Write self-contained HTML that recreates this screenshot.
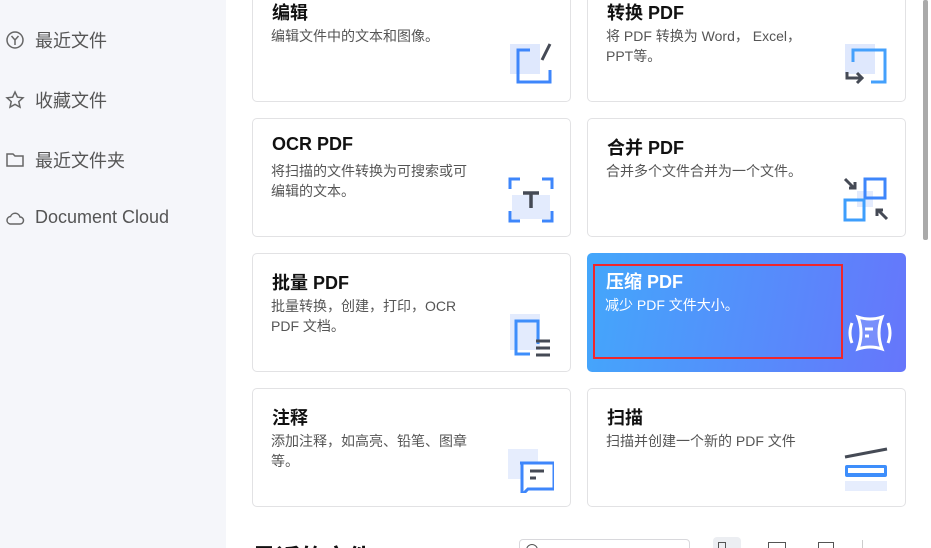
<!DOCTYPE html>
<html><head><meta charset="utf-8"><style>
*{margin:0;padding:0;box-sizing:border-box}
html,body{width:931px;height:548px;overflow:hidden}
body{background:#fff;font-family:"Liberation Sans","Noto Sans CJK SC",sans-serif;position:relative}
.side{position:absolute;left:0;top:0;width:226px;height:548px;background:#f5f6fa}
.nav{position:absolute;left:5px;font-size:18px;color:#555;display:flex;align-items:center;gap:10px}
.nav svg{width:20px;height:20px}
.card{position:absolute;width:319px;height:119px;border:1px solid #e2e2e4;border-radius:5px;background:#fff}
.card h3{position:absolute;left:19px;top:15px;font-size:18px;font-weight:bold;color:#111}
.card p{position:absolute;left:18px;top:42px;width:208px;font-size:14px;line-height:20px;color:#555}
.card svg{position:absolute;right:16px;top:58px;width:46px;height:46px}
.blue{background:linear-gradient(100deg,#43a7fb,#6676fb);border:none}
.blue h3,.blue p{color:#fff}
.sb{position:absolute;left:923px;top:0;width:5px;height:240px;background:#aaa;border-radius:2px}
</style></head><body>
<div class="side">
<div class="nav" style="top:27px"><svg viewBox="0 0 20 20" fill="none" stroke="#666" stroke-width="1.5"><circle cx="10" cy="10" r="8"/><path d="M6.5 6l3.5 4 3.5-4M10 10v5"/></svg>最近文件</div>
<div class="nav" style="top:87px"><svg viewBox="0 0 20 20" fill="none" stroke="#666" stroke-width="1.5"><path d="M10 2l2.4 5.2 5.6.6-4.2 3.8 1.2 5.6L10 14.4 5 17.2l1.2-5.6L2 7.8l5.6-.6z"/></svg>收藏文件</div>
<div class="nav" style="top:147px"><svg viewBox="0 0 20 20" fill="none" stroke="#666" stroke-width="1.5"><path d="M2 4h6l2 2h8v10H2z"/></svg>最近文件夹</div>
<div class="nav" style="top:207px"><svg viewBox="0 0 20 20" fill="none" stroke="#666" stroke-width="1.5"><path d="M5 16h10a3.5 3.5 0 000-7 5 5 0 00-9.5-.5A3.8 3.8 0 005 16z"/></svg>Document Cloud</div>
</div>
<div class="sb"></div>

<div class="card" style="left:252px;top:-17px"><h3>编辑</h3><p>编辑文件中的文本和图像。</p>
<svg viewBox="0 0 46 46"><rect x="2" y="2" width="30" height="30" fill="#dfe8fd"/><path d="M22 8H10v32h32V28" fill="none" stroke="#3e86fb" stroke-width="3"/><path d="M42 2l-8 16" stroke="#454a55" stroke-width="3"/></svg></div>
<div class="card" style="left:587px;top:-17px"><h3>转换 PDF</h3><p>将 PDF 转换为 Word， Excel，PPT等。</p>
<svg viewBox="0 0 46 46"><rect x="2" y="2" width="30" height="30" fill="#dfe8fd"/><path d="M10 20V8h32v32H28" fill="none" stroke="#44a0fc" stroke-width="3"/><path d="M4 30v6h14M14 31l5 5-5 5" fill="none" stroke="#454a55" stroke-width="3"/></svg></div>

<div class="card" style="left:252px;top:118px"><h3>OCR PDF</h3><p>将扫描的文件转换为可搜索或可编辑的文本。</p>
<svg viewBox="0 0 46 46"><rect x="4" y="18" width="38" height="24" fill="#e3ebfd"/><path d="M2 12V2h10M34 2h10v10M2 34v10h10M34 44h10V34" fill="none" stroke="#3e86fb" stroke-width="3"/><path d="M15 16h16M23 16v15" stroke="#454a55" stroke-width="3.5"/></svg></div>
<div class="card" style="left:587px;top:118px"><h3>合并 PDF</h3><p>合并多个文件合并为一个文件。</p>
<svg viewBox="0 0 46 46"><rect x="14" y="14" width="16" height="16" fill="#e3ebfd"/><rect x="22" y="2" width="20" height="19" fill="none" stroke="#3e86fb" stroke-width="3"/><rect x="2" y="23" width="19" height="20" fill="none" stroke="#3e9efc" stroke-width="3"/><path d="M2 2l9 9M6 11h6V5M44 42l-9-9M40 33h-6v6" fill="none" stroke="#454a55" stroke-width="3"/></svg></div>

<div class="card" style="left:252px;top:253px"><h3>批量 PDF</h3><p>批量转换，创建，打印，OCR PDF 文档。</p>
<svg viewBox="0 0 46 46"><rect x="2" y="2" width="30" height="36" fill="#e3ebfd"/><path d="M30 32V9H8v33h14" fill="none" stroke="#3e8efb" stroke-width="3"/><path d="M28 29h14M28 36h14M28 43h14" stroke="#454a55" stroke-width="3"/></svg></div>
<div class="card blue" style="left:587px;top:253px"><h3>压缩 PDF</h3><p>减少 PDF 文件大小。</p>
<svg viewBox="0 0 46 46" style="right:14px;top:56px"><path d="M12 8q12 4 24 0q-6 16 0 32q-12-4-24 0q6-16 0-32z" fill="rgba(255,255,255,.15)" stroke="#fff" stroke-width="3"/><path d="M6 14q-4 10 0 20M42 14q4 10 0 20M19 20h8M19 27h4" fill="none" stroke="#fff" stroke-width="3"/></svg></div>
<div style="position:absolute;left:593px;top:264px;width:250px;height:95px;border:2px solid #f0262d"></div>

<div class="card" style="left:252px;top:388px"><h3>注释</h3><p>添加注释，如高亮、铅笔、图章等。</p>
<svg viewBox="0 0 46 46"><rect x="0" y="2" width="30" height="30" fill="#e6edfd"/><path d="M12 16h34v26H20l-6 6V16z" fill="#fff" stroke="#3e86fb" stroke-width="3"/><path d="M22 24h14M22 31h6" stroke="#454a55" stroke-width="3"/></svg></div>
<div class="card" style="left:587px;top:388px"><h3>扫描</h3><p>扫描并创建一个新的 PDF 文件</p>
<svg viewBox="0 0 46 46"><path d="M2 10l42-8" stroke="#454a55" stroke-width="3"/><rect x="2" y="18" width="42" height="12" rx="2" fill="#3e8efb"/><rect x="5" y="21" width="36" height="5" fill="#fff"/><rect x="2" y="34" width="42" height="10" fill="#e6edfd"/></svg></div>

<div style="position:absolute;left:252px;top:538px;font-size:24px;font-weight:bold;color:#111">最近的文件</div>
<div style="position:absolute;left:519px;top:539px;width:171px;height:30px;border:1px solid #d8d8dc;border-radius:4px;font-size:13px;color:#999;padding:5px 0 0 34px">搜索</div>
<div style="position:absolute;left:526px;top:544px;width:12px;height:12px;border:1.5px solid #555;border-radius:50%"></div>
<div style="position:absolute;left:713px;top:537px;width:28px;height:20px;background:#eceef2;border-radius:4px"></div>
<div style="position:absolute;left:718px;top:542px;width:8px;height:8px;border:1.5px solid #555"></div>
<div style="position:absolute;left:768px;top:542px;width:18px;height:8px;border:1.5px solid #555"></div>
<div style="position:absolute;left:818px;top:542px;width:16px;height:8px;border:1.5px solid #555"></div>
<div style="position:absolute;left:862px;top:540px;width:1px;height:10px;background:#ccc"></div>
</body></html>
